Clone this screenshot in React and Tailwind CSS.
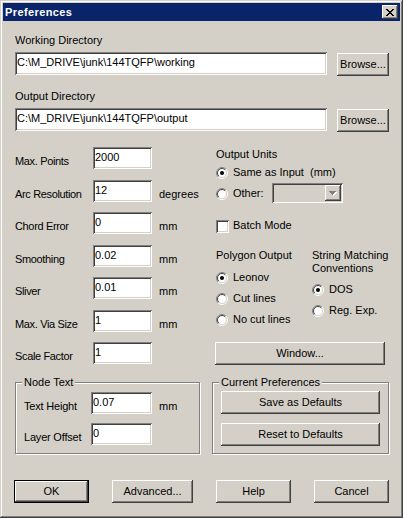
import React from "react";

const SUNKEN =
  "shadow-[inset_1px_1px_0_#808080,inset_-1px_-1px_0_#ffffff,inset_2px_2px_0_#404040,inset_-2px_-2px_0_#d4d0c8]";
const RAISED =
  "shadow-[inset_-1px_-1px_0_#404040,inset_1px_1px_0_#ffffff,inset_-2px_-2px_0_#808080,inset_2px_2px_0_#d4d0c8]";
const DEFAULT_BTN =
  "shadow-[inset_0_0_0_1px_#000000,inset_-2px_-2px_0_#404040,inset_2px_2px_0_#ffffff,inset_-3px_-3px_0_#808080,inset_3px_3px_0_#d4d0c8]";
const GROUP =
  "border border-[#808080] shadow-[inset_1px_1px_0_#ffffff,1px_1px_0_#ffffff]";

function Edit({ className, text }) {
  return (
    <div
      className={
        "bg-white pl-[2px] pt-[4px] whitespace-nowrap overflow-hidden shrink-0 " +
        SUNKEN +
        " " +
        className
      }
    >
      {text}
    </div>
  );
}

function Btn({ className, children, def }) {
  return (
    <div
      className={
        "bg-[#d4d0c8] flex items-center justify-center shrink-0 " +
        (def ? DEFAULT_BTN : RAISED) +
        " " +
        className
      }
    >
      {children}
    </div>
  );
}

function Radio({ checked }) {
  return (
    <svg width="12" height="12" viewBox="0 0 12 12" className="block shrink-0 mt-[1px]">
      <circle cx="6" cy="6" r="5" fill="#ffffff" />
      <path d="M2.111 9.889A5.5 5.5 0 0 1 9.889 2.111" stroke="#808080" fill="none" />
      <path d="M9.889 2.111A5.5 5.5 0 0 1 2.111 9.889" stroke="#ffffff" fill="none" />
      <path d="M2.818 9.182A4.5 4.5 0 0 1 9.182 2.818" stroke="#404040" fill="none" />
      <path d="M9.182 2.818A4.5 4.5 0 0 1 2.818 9.182" stroke="#d4d0c8" fill="none" />
      {checked && <circle cx="6" cy="6" r="2" fill="#000000" />}
    </svg>
  );
}

function RadioRow({ checked, label, className }) {
  return (
    <div className={"flex items-start h-[13px] " + className}>
      <Radio checked={checked} />
      <span className="ml-[5px] whitespace-pre">{label}</span>
    </div>
  );
}

function CloseGlyph() {
  const rects = [
    [0, 0, 2], [6, 0, 2],
    [1, 1, 2], [5, 1, 2],
    [2, 2, 4],
    [3, 3, 2],
    [2, 4, 4],
    [1, 5, 2], [5, 5, 2],
    [0, 6, 2], [6, 6, 2],
  ];
  return (
    <svg width="8" height="7" viewBox="0 0 8 7" shapeRendering="crispEdges" className="block">
      {rects.map(([x, y, w], i) => (
        <rect key={i} x={x} y={y} width={w} height="1" fill="#000000" />
      ))}
    </svg>
  );
}

function ArrowDisabled() {
  return (
    <svg width="8" height="5" viewBox="0 0 8 5" shapeRendering="crispEdges" className="block">
      <rect x="1" y="1" width="7" height="1" fill="#ffffff" />
      <rect x="2" y="2" width="5" height="1" fill="#ffffff" />
      <rect x="3" y="3" width="3" height="1" fill="#ffffff" />
      <rect x="4" y="4" width="1" height="1" fill="#ffffff" />
      <rect x="0" y="0" width="7" height="1" fill="#808080" />
      <rect x="1" y="1" width="5" height="1" fill="#808080" />
      <rect x="2" y="2" width="3" height="1" fill="#808080" />
      <rect x="3" y="3" width="1" height="1" fill="#808080" />
    </svg>
  );
}

function FieldRow({ label, value, unit, className }) {
  return (
    <div className={"flex items-start h-[22px] " + className}>
      <span className="w-[78px] mt-[8px] whitespace-nowrap shrink-0 tracking-[-0.35px]">{label}</span>
      <Edit className="w-[59px] h-[22px]" text={value} />
      {unit && <span className="ml-[7px] mt-[8px] whitespace-nowrap">{unit}</span>}
    </div>
  );
}

function NodeRow({ label, value, unit, className }) {
  return (
    <div className={"flex items-start h-[22px] " + className}>
      <span className="w-[67px] mt-[8px] whitespace-nowrap shrink-0 tracking-[-0.2px]">{label}</span>
      <Edit className="w-[61px] h-[22px]" text={value} />
      {unit && <span className="ml-[7px] mt-[8px] whitespace-nowrap">{unit}</span>}
    </div>
  );
}

export default function App() {
  return (
    <div className="w-[403px] h-[518px] bg-[#d4d0c8] p-[3px] flex flex-col overflow-hidden font-['Liberation_Sans',Arial,sans-serif] text-[11px] leading-[13px] text-black shadow-[inset_-1px_-1px_0_#404040,inset_1px_1px_0_#d4d0c8,inset_-2px_-2px_0_#808080,inset_2px_2px_0_#ffffff]">
      {/* Title bar */}
      <div className="h-[18px] shrink-0 bg-[#0a246a] flex items-center justify-between pl-[2px] pr-[2px]">
        <span className="text-white font-bold text-[11px] leading-[18px] tracking-[0.4px]">
          Preferences
        </span>
        <div className={"w-[16px] h-[14px] bg-[#d4d0c8] flex items-center justify-center " + RAISED}>
          <CloseGlyph />
        </div>
      </div>

      {/* Body */}
      <div className="flex flex-col pl-[12px] pr-[11px]">
        <div className="mt-[13px] h-[13px]">Working Directory</div>
        <div className="mt-[5px] flex items-start h-[23px]">
          <Edit className="w-[312px] h-[23px]" text={"C:\\M_DRIVE\\junk\\144TQFP\\working"} />
          <Btn className="ml-auto w-[52px] h-[23px] mt-[1px]">Browse...</Btn>
        </div>

        <div className="mt-[15px] h-[13px]">Output Directory</div>
        <div className="mt-[5px] flex items-start h-[23px]">
          <Edit className="w-[312px] h-[23px]" text={"C:\\M_DRIVE\\junk\\144TQFP\\output"} />
          <Btn className="ml-auto w-[52px] h-[23px] mt-[1px]">Browse...</Btn>
        </div>

        <div className="flex items-start">
          {/* Left column */}
          <div className="w-[197px] shrink-0 flex flex-col">
            <FieldRow className="mt-[16px]" label="Max. Points" value="2000" />
            <FieldRow className="mt-[11px]" label="Arc Resolution" value="12" unit="degrees" />
            <FieldRow className="mt-[10px]" label="Chord Error" value="0" unit="mm" />
            <FieldRow className="mt-[11px]" label="Smoothing" value="0.02" unit="mm" />
            <FieldRow className="mt-[10px]" label="Sliver" value="0.01" unit="mm" />
            <FieldRow className="mt-[11px]" label="Max. Via Size" value="1" unit="mm" />
            <FieldRow className="mt-[10px]" label="Scale Factor" value="1" />

            <div className={"relative mt-[18px] w-[185px] h-[72px] pt-[9px] pl-[8px] " + GROUP}>
              <span className="absolute -top-[7px] left-[6px] px-[2px] bg-[#d4d0c8]">Node Text</span>
              <NodeRow label="Text Height" value="0.07" unit="mm" />
              <NodeRow className="mt-[9px]" label="Layer Offset" value="0" />
            </div>
          </div>

          {/* Right column */}
          <div className="w-[177px] shrink-0 flex flex-col">
            <div className="mt-[17px] ml-[4px] h-[13px]">Output Units</div>
            <RadioRow className="mt-[5px] ml-[4px]" checked label="Same as Input  (mm)" />
            <div className="mt-[8px] ml-[4px] flex items-start h-[13px]">
              <Radio />
              <span className="ml-[5px] w-[39px] shrink-0">Other:</span>
              <div className={"-mt-[4px] w-[71px] h-[20px] shrink-0 bg-[#d4d0c8] flex justify-end p-[2px] " + SUNKEN}>
                <div className={"w-[16px] h-[16px] bg-[#d4d0c8] flex items-center justify-center " + RAISED}>
                  <ArrowDisabled />
                </div>
              </div>
            </div>
            <div className="mt-[19px] ml-[4px] flex items-start h-[13px]">
              <div className={"w-[13px] h-[13px] mt-[1px] bg-white shrink-0 " + SUNKEN} />
              <span className="ml-[4px]">Batch Mode</span>
            </div>

            <div className="mt-[17px] ml-[4px] flex items-start">
              <div className="w-[96px] shrink-0 flex flex-col">
                <div className="h-[13px] whitespace-nowrap">Polygon Output</div>
                <RadioRow className="mt-[9px]" checked label="Leonov" />
                <RadioRow className="mt-[8px]" label="Cut lines" />
                <RadioRow className="mt-[8px]" label="No cut lines" />
              </div>
              <div className="flex flex-col">
                <div className="h-[13px] whitespace-nowrap">String Matching</div>
                <div className="h-[13px] whitespace-nowrap">Conventions</div>
                <RadioRow className="mt-[8px]" checked label="DOS" />
                <RadioRow className="mt-[8px]" label="Reg. Exp." />
              </div>
            </div>

            <Btn className="mt-[16px] ml-[3px] w-[170px] h-[23px]">Window...</Btn>

            <div className={"relative mt-[17px] w-[177px] h-[72px] pt-[8px] pl-[8px] " + GROUP}>
              <span className="absolute -top-[7px] left-[6px] px-[2px] bg-[#d4d0c8]">Current Preferences</span>
              <Btn className="w-[159px] h-[23px]">Save as Defaults</Btn>
              <Btn className="mt-[9px] w-[159px] h-[23px]">Reset to Defaults</Btn>
            </div>
          </div>
        </div>

        {/* Bottom buttons */}
        <div className="mt-[26px] -ml-[1px] flex justify-between">
          <Btn def className="w-[75px] h-[23px]">OK</Btn>
          <Btn className="w-[81px] h-[23px]">Advanced...</Btn>
          <Btn className="w-[75px] h-[23px]">Help</Btn>
          <Btn className="w-[75px] h-[23px]">Cancel</Btn>
        </div>
      </div>
    </div>
  );
}
